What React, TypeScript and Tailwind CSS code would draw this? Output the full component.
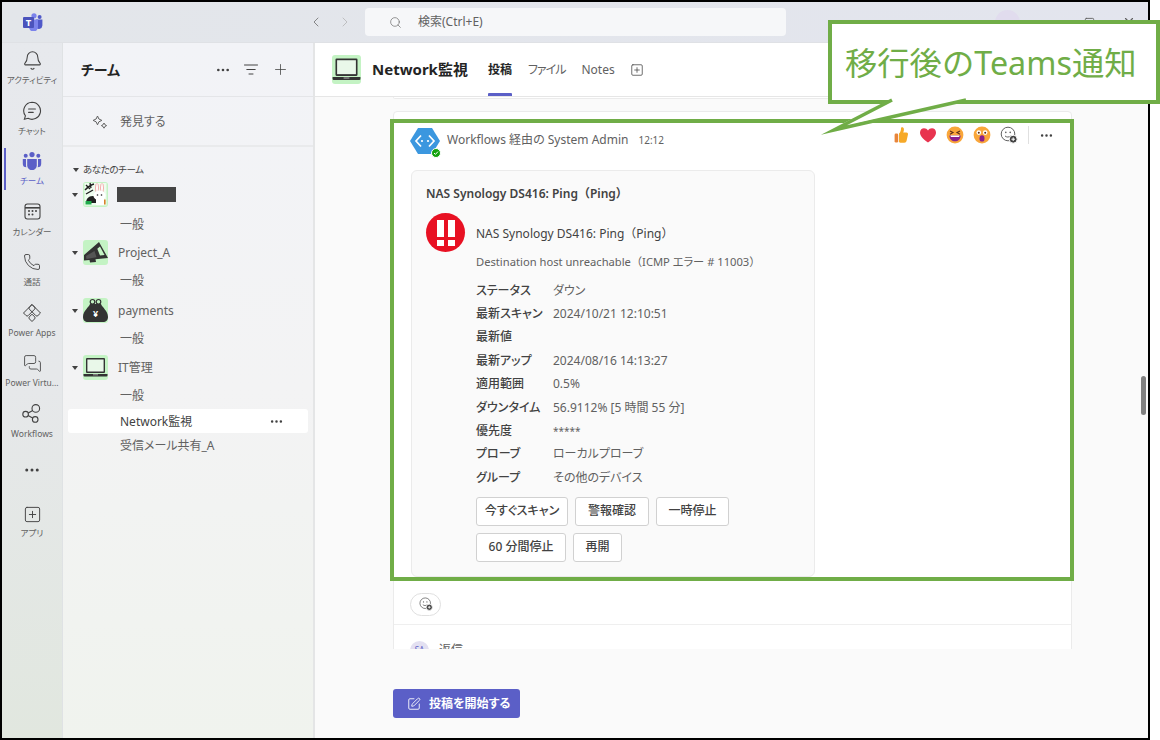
import { Bell, ChevronLeft, ChevronRight, Ellipsis, MessagesSquare, Minus, Phone, Plus, Search, Square, SquarePen, SquarePlus, X } from "lucide-react";

function TeamsLogo() {
  return (
    <svg width="20" height="18" viewBox="0 0 20 18">
      <circle cx="11" cy="2.8" r="2.6" fill="#7b83eb" />
      <circle cx="16.6" cy="4" r="2" fill="#5059c9" />
      <path d="M13 6.5h6.4v6a3.6 3.6 0 0 1-6.4 2z" fill="#5059c9" />
      <path d="M6 6.5h9v7.5a4.5 4.5 0 0 1-9 0z" fill="#7b83eb" />
      <rect x="0" y="4" width="11" height="11" rx="1" fill="#4b53bc" />
      <text x="5.5" y="12.8" textAnchor="middle" fontSize="9.5" fontWeight="700" fill="#fff">T</text>
    </svg>
  );
}

function ChatIcon() {
  return (
    <svg width="20" height="20" viewBox="0 0 20 20" fill="none" stroke="#424242" strokeWidth="1.1" strokeLinecap="round">
      <path d="M10 1.3a8.5 8.5 0 1 1-4 16l-3.6 1 1-3.5A8.5 8.5 0 0 1 10 1.3z" />
      <path d="M6.6 8h6.8M6.6 11.4h4.6" />
    </svg>
  );
}

function TeamIcon() {
  return (
    <svg width="20" height="18" viewBox="0 0 20 18" fill="#5b5fc7">
      <circle cx="10" cy="2.6" r="2.6" />
      <circle cx="3.7" cy="3.8" r="2" />
      <circle cx="16.3" cy="3.8" r="2" />
      <path d="M5.2 7h9.6v6.4a4.8 4.8 0 0 1-9.6 0z" />
      <path d="M0.8 7H4v6.3c0 .8.1 1.4.4 2A3.6 3.6 0 0 1 .8 11.7zM16 7h3.2v4.7a3.6 3.6 0 0 1-3.6 3.6c.3-.6.4-1.2.4-2z" />
    </svg>
  );
}

function CalendarIcon() {
  return (
    <svg width="17" height="17" viewBox="0 0 17 17" fill="none" stroke="#424242" strokeWidth="1.1">
      <rect x="1" y="1" width="15" height="15" rx="2.4" />
      <path d="M1 4.8h15" strokeWidth="1.6" />
      <g fill="#424242" stroke="none">
        <circle cx="5" cy="8" r="1" />
        <circle cx="8.5" cy="8" r="1" />
        <circle cx="12" cy="8" r="1" />
        <circle cx="5" cy="11.6" r="1" />
        <circle cx="8.5" cy="11.6" r="1" />
      </g>
    </svg>
  );
}

function PowerAppsIcon() {
  return (
    <svg width="20" height="20" viewBox="0 0 20 20" fill="none" stroke="#424242" strokeWidth="1" strokeLinejoin="round">
      <path d="M10 1.5l2.6 2.6a1.5 1.5 0 0 1 0 2.1L6.2 12.6a1.5 1.5 0 0 1-2.1 0L1.5 10z" />
      <path d="M10 1.5L7.4 4.1a1.5 1.5 0 0 0 0 2.1l6.4 6.4a1.5 1.5 0 0 0 2.1 0L18.5 10z" />
      <path d="M10 18.5l-2.6-2.6a1.5 1.5 0 0 1 0-2.1l2.6-2.6 2.6 2.6a1.5 1.5 0 0 1 0 2.1z" />
    </svg>
  );
}

function WorkflowsIcon() {
  return (
    <svg width="20" height="19" viewBox="0 0 20 19" fill="none" stroke="#424242" strokeWidth="1.1">
      <circle cx="13.8" cy="4.4" r="3.8" />
      <circle cx="3.6" cy="10.2" r="2.8" />
      <circle cx="13.2" cy="15.4" r="2.8" />
      <path d="M6.2 9l4.6-2.6M6 11.6l4.7 2.5" />
    </svg>
  );
}

function SparkleIcon() {
  return (
    <svg width="16" height="14" viewBox="0 0 16 14" fill="none" stroke="#616161" strokeWidth="1">
      <path d="M5.5 1l1.4 3 3 1.4-3 1.4-1.4 3-1.4-3-3-1.4 3-1.4z" />
      <path d="M12 8l.9 1.7 1.7.9-1.7.9-.9 1.7-.9-1.7-1.7-.9 1.7-.9z" />
    </svg>
  );
}

function FilterIcon() {
  return (
    <svg width="14" height="11" viewBox="0 0 14 11" stroke="#424242" strokeWidth="1" strokeLinecap="round">
      <path d="M.5 1h13M2.8 5.5h8.4M5 10h4" />
    </svg>
  );
}

function Caret() {
  return <span className="w-0 h-0 border-x-[3.5px] border-x-transparent border-t-[4px] border-t-[#424242]" />;
}

function LaptopIcon({ size }: { size: number }) {
  return (
    <div className="flex items-center justify-center rounded-[3px] bg-[#c4f3c4]" style={{ width: size, height: size }}>
      <svg width={size} height={size} viewBox="0 0 25 25">
        <rect x="3" y="3" width="19" height="15" rx="1" fill="#333" />
        <rect x="4.4" y="4.5" width="16.2" height="12" fill="#e9f8e9" />
        <path d="M0.5 19h24v1.6a1 1 0 0 1-1 1h-22a1 1 0 0 1-1-1z" fill="#333" />
        <rect x="10" y="19.4" width="5" height="0.9" fill="#aaa" />
      </svg>
    </div>
  );
}

function BunnyAvatar() {
  return (
    <div className="w-[25px] h-[25px] rounded-[3px] bg-[#c4f3c4] overflow-hidden">
      <svg width="25" height="25" viewBox="0 0 25 25">
        <rect x="1.5" y="1" width="22" height="22.5" fill="#eefcee" />
        <path d="M2 8c3-3 5-5 9-6M3 12l7-4M3 3l4 4M7 1l1 5" stroke="#222" strokeWidth="1.4" fill="none" />
        <path d="M3 21c0-4 2.5-7 6.5-7s6.5 3 6.5 7z" fill="#222" />
        <path d="M2.5 19h6v3.500h-6z" fill="#1faa4b" />
        <ellipse cx="14" cy="6" rx="1.5" ry="4.5" fill="#fff" stroke="#f08a8a" strokeWidth=".7" />
        <ellipse cx="19" cy="6" rx="1.5" ry="4.5" fill="#fff" stroke="#f08a8a" strokeWidth=".7" />
        <ellipse cx="16.5" cy="13.5" rx="6" ry="5" fill="#fff" />
        <path d="M13 17h8v6h-8z" fill="#fff" />
        <circle cx="14.5" cy="13" r=".8" fill="#222" />
        <circle cx="18.5" cy="13" r=".8" fill="#222" />
        <rect x="21" y="17.5" width="1.6" height="5" fill="#d9822b" />
      </svg>
    </div>
  );
}

function MegaphoneAvatar() {
  return (
    <div className="w-[25px] h-[25px] rounded-[3px] bg-[#c4f3c4] overflow-hidden">
      <svg width="25" height="25" viewBox="0 0 25 25">
        <path d="M16 2L1 15v5.5l5.5-.5.5 2.5 6-.5-.5-2.700L25 18z" fill="#333" />
        <path d="M17 6.5l4.5 8.500-4.500.4-2.700-6.700z" fill="#c4f3c4" />
        <path d="M3 16l8.500-5 2 6.200-10 1.800z" fill="#555" />
      </svg>
    </div>
  );
}

function PurseAvatar() {
  return (
    <div className="w-[25px] h-[25px] rounded-[3px] bg-[#c4f3c4] overflow-hidden">
      <svg width="25" height="25" viewBox="0 0 25 25">
        <circle cx="9.5" cy="3.8" r="2.3" fill="none" stroke="#333" strokeWidth="1.2" />
        <circle cx="15.5" cy="3.8" r="2.3" fill="none" stroke="#333" strokeWidth="1.2" />
        <path d="M7 6h11c1 3 7 7 7 13 0 3-2 5-5 5H5c-3 0-5-2-5-5 0-6 6-10 7-13z" fill="#333" />
        <text x="12.5" y="19" textAnchor="middle" fontSize="9" fontWeight="700" fill="#fff">¥</text>
      </svg>
    </div>
  );
}

function AddEmojiIcon({ size }: { size: number }) {
  return (
    <svg width={size} height={size} viewBox="0 0 18 18" fill="none">
      <circle cx="8" cy="8" r="6.8" stroke="#616161" strokeWidth="1" />
      <circle cx="5.8" cy="6.4" r=".8" fill="#616161" />
      <circle cx="10.2" cy="6.4" r=".8" fill="#616161" />
      <path d="M5.3 10.2c1.4 1.2 3.6 1.2 5 0" stroke="#616161" strokeWidth="1" strokeLinecap="round" />
      <circle cx="13.2" cy="13.2" r="4" fill="#424242" stroke="#fff" />
      <path d="M13.2 11.4v3.6M11.4 13.2h3.6" stroke="#fff" strokeWidth="1" />
    </svg>
  );
}

function ThumbEmoji() {
  return (
    <svg width="18" height="18" viewBox="0 0 18 18">
      <path d="M7 7.6c1.600-1.600 2-3.600 2-5.400 0-1.600 2.800-1.400 2.900.8.100 1.400-.3 2.600-.7 3.600h3.200c1.400 0 1.900 1.200 1.500 2.200l-1.300 6c-.3 1.200-1 1.900-2.300 1.900H8.400c-1 0-1.400-.4-1.400-1.200z" fill="#f6a928" />
      <rect x="2.6" y="7.6" width="3.6" height="9" rx="1.4" fill="#e8853a" />
    </svg>
  );
}

function HeartEmoji() {
  return (
    <svg width="18" height="18" viewBox="0 0 18 18">
      <path d="M9 16.4C4 12.8 1 10 1 6.400 1 3.800 3 2.200 5 2.200c1.700 0 3.100.8 4 2.300.9-1.500 2.300-2.300 4-2.300 2 0 4 1.600 4 4.200 0 3.600-3 6.400-8 10z" fill="#e8344f" />
    </svg>
  );
}

function LaughEmoji() {
  return (
    <svg width="18" height="18" viewBox="0 0 18 18">
      <circle cx="9" cy="9" r="8.4" fill="#f9a63a" />
      <path d="M4 5l3 1.600-3 1.600M14 5l-3 1.600 3 1.600" stroke="#5b2c1a" strokeWidth="1.1" fill="none" />
      <path d="M3.400 9.400h11.200c0 3.600-2.600 5.800-5.600 5.800s-5.600-2.200-5.600-5.800z" fill="#8a1f8c" />
      <path d="M4.400 9.400h9.200l-.5 1.500H4.900z" fill="#fff" />
    </svg>
  );
}

function WowEmoji() {
  return (
    <svg width="18" height="18" viewBox="0 0 18 18">
      <circle cx="9" cy="9" r="8.4" fill="#f9a63a" />
      <circle cx="5.8" cy="6.6" r="2.3" fill="#fff" />
      <circle cx="12.2" cy="6.6" r="2.3" fill="#fff" />
      <circle cx="5.8" cy="6.8" r="1" fill="#5b2c1a" />
      <circle cx="12.2" cy="6.8" r="1" fill="#5b2c1a" />
      <ellipse cx="9" cy="12.4" rx="2.5" ry="3.2" fill="#8a1f8c" />
    </svg>
  );
}

function FlowBotAvatar() {
  return (
    <div className="relative w-[30px] h-[28px]">
      <svg width="30" height="28" viewBox="0 0 30 28">
        <path d="M8 1h14l8 13-8 13H8L0 14z" fill="#3b97df" />
        <path d="M11 8.500L6 14l5 5.500M19 8.500l5 5.500-5 5.500" stroke="#fff" strokeWidth="1.7" fill="none" />
        <circle cx="12" cy="14" r="1.1" fill="#fff" />
        <circle cx="18" cy="14" r="1.1" fill="#fff" />
      </svg>
      <span className="absolute right-[-1px] bottom-[-3px] flex items-center justify-center w-[10px] h-[10px] rounded-full bg-[#13a10e] border border-white">
        <svg width="6" height="6" viewBox="0 0 6 6" fill="none" stroke="#fff" strokeWidth="1">
          <path d="M1 3l1.400 1.400L5 1.600" />
        </svg>
      </span>
    </div>
  );
}

function AlertIcon() {
  return (
    <div className="flex items-center justify-center gap-[4px] w-[39px] h-[39px] rounded-full bg-[#e81123]">
      {[0, 1].map((i) => (
        <div key={i} className="flex flex-col gap-[3px]">
          <span className="block w-[7px] h-[17px] bg-white" />
          <span className="block w-[7px] h-[6px] bg-white" />
        </div>
      ))}
    </div>
  );
}

const railItems = [
  { label: "アクティビティ", icon: <Bell size={21} strokeWidth={1.2} color="#424242" /> },
  { label: "チャット", icon: <ChatIcon /> },
  { label: "チーム", icon: <TeamIcon />, active: true },
  { label: "カレンダー", icon: <CalendarIcon /> },
  { label: "通話", icon: <Phone size={18} strokeWidth={1.2} color="#424242" /> },
  { label: "Power Apps", icon: <PowerAppsIcon /> },
  { label: "Power Virtu...", icon: <MessagesSquare size={19} strokeWidth={1.1} color="#424242" /> },
  { label: "Workflows", icon: <WorkflowsIcon /> },
];

const facts = [
  ["ステータス", "ダウン"],
  ["最新スキャン", "2024/10/21 12:10:51"],
  ["最新値", ""],
  ["最新アップ", "2024/08/16 14:13:27"],
  ["適用範囲", "0.5%"],
  ["ダウンタイム", "56.9112% [5 時間 55 分]"],
  ["優先度", "*****"],
  ["プローブ", "ローカルプローブ"],
  ["グループ", "その他のデバイス"],
];

const btn = "h-[29px] bg-white border border-[#d1d1d1] rounded-[3px] text-[12px] font-medium text-[#424242]";

function Rail() {
  return (
    <div className="w-[61px] shrink-0 flex flex-col pt-[3px] bg-gradient-to-b from-[#e7e9ed] via-[#e6e8ea] to-[#e1e7df] border-r border-[#dfe2e4]">
      {railItems.map((item) => (
        <div key={item.label} className="relative h-[50.5px] shrink-0 flex flex-col items-center">
          {item.active && <span className="absolute left-[2px] top-[1px] w-[2px] h-[42px] bg-[#5b5fc7]" />}
          <div className="h-[28px] flex items-center justify-center">{item.icon}</div>
          <span className={item.active ? "text-[8.5px] leading-[12px] whitespace-nowrap text-[#5b5fc7]" : "text-[8.5px] leading-[12px] whitespace-nowrap text-[#616161]"}>{item.label}</span>
        </div>
      ))}
      <div className="h-[36px] mt-[2px] flex items-center justify-center">
        <Ellipsis size={18} color="#424242" />
      </div>
      <div className="mt-[17px] flex flex-col items-center">
        <SquarePlus size={19} strokeWidth={1.2} color="#424242" />
        <span className="mt-[3px] text-[8.5px] leading-[12px] text-[#616161]">アプリ</span>
      </div>
    </div>
  );
}

function TeamRow({ avatar, name }: { avatar: React.ReactNode; name: React.ReactNode }) {
  return (
    <div className="h-[25px] flex items-center pl-[9px]">
      <Caret />
      <div className="ml-[5px]">{avatar}</div>
      <div className="ml-[10px] text-[12px] text-[#616161]">{name}</div>
    </div>
  );
}

function Channel({ name, active }: { name: string; active?: boolean }) {
  if (active) {
    return (
      <div className="mx-[5px] mt-[1px] h-[24px] pl-[52px] pr-[24px] flex items-center justify-between rounded-[3px] bg-white text-[12px] text-[#424242]">
        <span className="pt-[1px]">{name}</span>
        <Ellipsis size={15} color="#424242" />
      </div>
    );
  }
  return <div className="h-[25px] pl-[57px] flex items-center text-[12px] text-[#616161]">{name}</div>;
}

function Sidebar() {
  return (
    <div className="w-[252px] shrink-0 flex flex-col bg-gradient-to-b from-[#f2f3f7] via-[#f3f3f4] to-[#f0f3ee] border-r-2 border-[#e4e5e6]">
      <div className="h-[54px] pl-[18px] pr-[24px] flex items-center justify-between border-b border-[#e4e5e8]">
        <span className="text-[14px] font-bold text-[#242424]">チーム</span>
        <div className="flex items-center gap-[13px]">
          <Ellipsis size={16} color="#424242" />
          <FilterIcon />
          <Plus size={17} strokeWidth={1.1} color="#424242" className="ml-[1px]" />
        </div>
      </div>
      <div className="h-[50px] pt-[2px] pl-[29px] flex items-center gap-[12px] border-b-2 border-[#e9eaec] text-[12px] text-[#616161]">
        <SparkleIcon />
        発見する
      </div>
      <div className="mt-[16px] pl-[10px] flex items-center gap-[4px] text-[9.5px] tracking-[-0.4px] leading-[14px] text-[#424242]">
        <Caret />
        あなたのチーム
      </div>
      <div className="mt-[5px] flex flex-col">
        <TeamRow avatar={<BunnyAvatar />} name={<span className="block ml-[-1px] w-[59px] h-[15px] bg-[#444] blur-[0.4px]" />} />
        <div className="mt-[5px]"><Channel name="一般" /></div>
        <div className="mt-[3px]"><TeamRow avatar={<MegaphoneAvatar />} name="Project_A" /></div>
        <div className="mt-[3px]"><Channel name="一般" /></div>
        <div className="mt-[5px]"><TeamRow avatar={<PurseAvatar />} name="payments" /></div>
        <div className="mt-[3px]"><Channel name="一般" /></div>
        <div className="mt-[4px]"><TeamRow avatar={<LaptopIcon size={25} />} name="IT管理" /></div>
        <div className="mt-[3px]"><Channel name="一般" /></div>
        <Channel name="Network監視" active />
        <Channel name="受信メール共有_A" />
      </div>
    </div>
  );
}

function AlertCard() {
  return (
    <div className="ml-[17px] w-[404px] pt-[14px] pb-[14px] pl-[14px] bg-[#fafafa] border border-[#ebebeb] rounded-[6px]">
      <div className="text-[12px] leading-[18px] font-semibold text-[#424242] [font-feature-settings:normal]">NAS Synology DS416: Ping（Ping）</div>
      <div className="mt-[10px] flex">
        <AlertIcon />
        <div className="ml-[11px] pt-[12px] text-[12px] text-[#424242]">
          <div className="leading-[18px] [font-feature-settings:normal]">NAS Synology DS416: Ping（Ping）</div>
          <div className="mt-[10px] leading-[18px] text-[11.2px] text-[#616161] [font-feature-settings:normal]">
            Destination host unreachable（ICMP <span className="[font-feature-settings:'palt']">エラー</span> # 11003）
          </div>
          <div className="mt-[8px] flex flex-col">
            {facts.map(([k, v]) => (
              <div key={k} className="h-[23.4px] flex items-center text-[12px]">
                <span className="w-[77px] shrink-0 font-medium text-[#424242]">{k}</span>
                <span className={v === "*****" ? "text-[10px] text-[#616161]" : "text-[#616161]"}>{v}</span>
              </div>
            ))}
          </div>
          <div className="mt-[7px] flex flex-col gap-[7px]">
            <div className="flex gap-[7px]">
              <button className={`${btn} w-[92px]`}>今すぐスキャン</button>
              <button className={`${btn} w-[74px]`}>警報確認</button>
              <button className={`${btn} w-[73px]`}>一時停止</button>
            </div>
            <div className="flex gap-[7px]">
              <button className={`${btn} w-[90px]`}>60 分間停止</button>
              <button className={`${btn} w-[49px]`}>再開</button>
            </div>
          </div>
        </div>
      </div>
    </div>
  );
}

function Main() {
  return (
    <div className="relative flex-1 min-w-0 flex flex-col bg-[#fafafa]">
      <div className="h-[54px] shrink-0 pl-[17px] flex items-center bg-white border-b border-[#e6e6e6]">
        <LaptopIcon size={29} />
        <span className="ml-[11px] text-[15px] font-bold text-[#242424]">Network監視</span>
        <div className="relative ml-[20px] h-full flex items-center">
          <span className="text-[12px] font-semibold text-[#242424]">投稿</span>
          <span className="absolute left-0 right-0 bottom-0 h-[3px] bg-[#5b5fc7] rounded-t-[1px]" />
        </div>
        <span className="ml-[16px] text-[12px] tracking-[-1px] text-[#616161]">ファイル</span>
        <span className="ml-[16px] text-[12px] text-[#616161]">Notes</span>
        <SquarePlus size={14} strokeWidth={1.3} color="#424242" className="ml-[15px]" />
      </div>
      <div className="h-[552px] shrink-0 overflow-hidden pl-[78px] pr-[76px]">
        <div className="h-[2px] bg-white border border-t-0 border-[#ebebeb] rounded-b-[3px]" />
        <div className="mt-[12px] pt-[15px] h-[600px] bg-white border border-[#ebebeb] rounded-t-[4px]">
          <div className="h-[28px] pl-[16px] pr-[17px] flex items-center">
            <FlowBotAvatar />
            <span className="ml-[7px] mb-[2px] text-[12px] text-[#616161]">Workflows 経由の System Admin</span>
            <span className="ml-[10px] mb-[2px] text-[10px] text-[#616161]">12:12</span>
            <div className="ml-auto self-start mt-[-1px] flex items-center gap-[9px]">
              <ThumbEmoji />
              <HeartEmoji />
              <LaughEmoji />
              <WowEmoji />
              <AddEmojiIcon size={18} />
              <span className="ml-[1px] w-px h-[18px] bg-[#e0e0e0]" />
              <Ellipsis size={15} color="#424242" className="ml-[1px]" />
            </div>
          </div>
          <div className="mt-[15px]"><AlertCard /></div>
          <div className="mt-[16px] ml-[16px] w-[31px] h-[23px] flex items-center justify-center rounded-full border border-[#e0e0e0]">
            <AddEmojiIcon size={14} />
          </div>
          <div className="mt-[8px] border-t border-[#efefef] pt-[16px] pl-[16px] flex items-center gap-[10px] text-[12px] text-[#616161]">
            <span className="flex items-center justify-center w-[19px] h-[19px] rounded-full bg-[#e3e0f1] text-[8px] text-[#5b5fc7]">SA</span>
            返信
          </div>
        </div>
      </div>
      <div className="pt-[40px] pl-[78px]">
        <button className="h-[29px] w-[127px] pl-[14px] flex items-center gap-[8px] rounded-[3px] bg-[#5b5fc7] text-[12px] font-semibold text-white">
          <SquarePen size={14} strokeWidth={1.5} />
          投稿を開始する
        </button>
      </div>
      <span className="absolute right-[2px] top-[333px] w-[5px] h-[39px] rounded-full bg-[#808080]" />
    </div>
  );
}

export default function App() {
  return (
    <div className="relative w-[1160px] h-[740px] overflow-hidden bg-white font-['Noto_Sans','Noto_Sans_CJK_JP',sans-serif] [font-feature-settings:'palt']">
      <div className="w-[1150px] h-[740px] flex flex-col border-2 border-black">
        <div className="h-[41px] shrink-0 flex items-center bg-gradient-to-r from-[#e3e6ea] to-[#e3e5ee] border-b border-[#dfe1e5]">
          <div className="w-[61px] flex justify-center"><TeamsLogo /></div>
          <div className="ml-[245px] flex items-center gap-[13px]">
            <ChevronLeft size={16} strokeWidth={1.1} color="#616161" />
            <ChevronRight size={16} strokeWidth={1.1} color="#b0b0b0" />
          </div>
          <div className="ml-[12px] w-[421px] h-[28px] pl-[24px] flex items-center gap-[16px] rounded-[4px] bg-[#f6f7f9] text-[12px] text-[#616161]">
            <Search size={13} strokeWidth={1.2} color="#616161" />
            検索(Ctrl+E)
          </div>
          <span className="ml-[209px] w-[25px] h-[25px] rounded-full bg-[#e1dcee]" />
          <Minus size={14} className="ml-[30px]" color="#616161" />
          <Square size={11} className="ml-[20px]" color="#616161" />
          <X size={14} className="ml-[27px]" color="#616161" />
        </div>
        <div className="flex-1 min-h-0 flex">
          <Rail />
          <Sidebar />
          <Main />
        </div>
      </div>
      {/* annotation drawn over the screenshot */}
      <div className="absolute left-[390px] top-[119px] w-[684px] h-[462px] border-4 border-[#70ad47]" />
      <div className="absolute left-[828px] top-[20px] w-[332px] h-[84px] flex items-center pl-[13px] bg-white border-4 border-[#70ad47] text-[32.3px] leading-none whitespace-nowrap text-[#70ad47] [font-feature-settings:normal]">
        移行後のTeams通知
      </div>
      <svg className="absolute left-[816px] top-[96px]" width="160" height="40" viewBox="0 0 160 40">
        <path d="M76 3L16 33 150 3z" fill="#fff" />
        <path d="M76 4L18 34 150 4" fill="none" stroke="#70ad47" strokeWidth="3.5" strokeMiterlimit="20" />
      </svg>
    </div>
  );
}
